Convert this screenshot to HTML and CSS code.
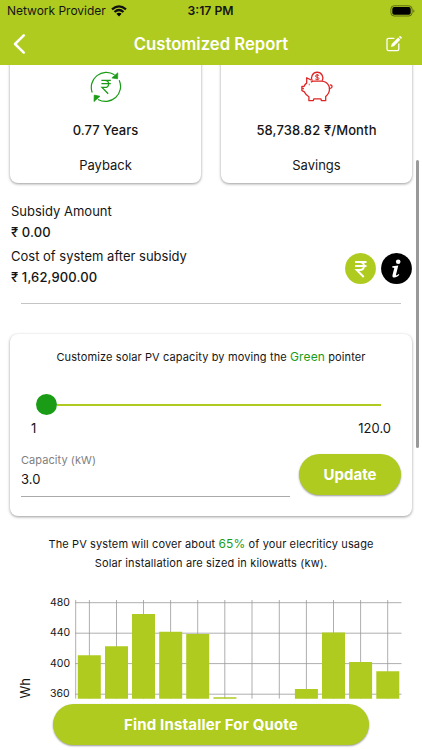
FILE: index.html
```html
<!DOCTYPE html>
<html lang="en">
<head>
<meta charset="utf-8">
<title>Customized Report</title>
<link rel="stylesheet" href="styles.css">
</head>
<body>
<header class="header">
  <div class="status">
    <div class="network"><span class="provider">Network Provider</span>
      <svg width="16" height="12" viewBox="0 0 16 12"><path d="M1 4.4Q8-1.8 15 4.4M3.5 7Q8 3 12.5 7" fill="none" stroke="#111" stroke-width="2.2"/><path d="M5.4 8.8Q8 6.6 10.6 8.8L8 11.4Z"/></svg>
    </div>
    <span class="clock">3:17 PM</span>
    <svg class="battery" width="26" height="12" viewBox="0 0 26 12"><rect x=".9" y=".8" width="21.2" height="10.2" rx="3.2" fill="none" stroke="#5c6c10" stroke-width="1"/><rect x="2.3" y="2.1" width="18.4" height="7.6" rx="1.8"/><path d="M23.4 4.2Q25.6 6 23.4 7.8Z" fill="#5c6c10"/></svg>
  </div>
  <nav class="nav">
    <svg class="back" width="14" height="22" viewBox="0 0 14 22"><path d="M11.8 2.3 3 11l8.8 8.6" fill="none" stroke="#fff" stroke-width="2.5" stroke-linecap="round" stroke-linejoin="round"/></svg>
    <h1 class="title">Customized Report</h1>
    <svg class="edit" width="18" height="18" viewBox="0 0 18 18"><path d="M9.4 3.4H3.6Q2 3.4 2 5v9Q2 15.7 3.6 15.7h8.6Q13.8 15.7 13.8 14V8.4" fill="none" stroke="#fff" stroke-width="1.3"/><path d="m6 11.9.7-2.8 6.5-6.5 2.1 2.1-6.5 6.5ZM13.9 1.9l.7-.7q.5-.4 1 0l1.1 1.1q.4.5 0 1l-.7.7Z" fill="#fff"/></svg>
  </nav>
</header>
<main class="content">
  <section class="stats">
    <article class="card stat">
      <svg class="stat-icon" width="32" height="32" viewBox="0 0 32 32" fill="none" stroke="#1a9c16" stroke-width="1.2"><path d="M2.2 21.5A15 15 0 0 1 24.5 3.8M29.2 9.2A15 15 0 0 1 8 28.4"/><path d="m27.8 1.8-.2 6-5.7-.9ZM4 30.6l.2-6.5 5.8 1.2Z" fill="#1a9c16" stroke-width=".7"/><path d="M11.4 9.4h9.4M11.4 12.7h9.4M11.5 9.4h3.2c5.2 0 5.2 7 0 7H12l6.2 6.3" stroke-width="1.3"/></svg>
      <strong class="value years">0.77 Years</strong><span class="label payback">Payback</span>
    </article>
    <article class="card stat">
      <svg class="stat-icon" width="32" height="32" viewBox="0 0 32 32" fill="none" stroke="#df2424" stroke-width="1.3" stroke-linejoin="round"><path d="M10 9 5.7 6.7v5.4Q3.8 13.4 3 15.4H.9v4.2l2.2 1q1.4 3.2 4.8 5.1v4h4.3l.7-1.9h6.9l.7 1.9h4.2v-4.2c5-4.3 5-10.6.4-14-1.4-1-2.6-1.4-4.4-1.4h-7.9Q11.1 10.1 10 11.2"/><path d="M11.2 9.7a5.7 5.7 0 1 1 10 0M27.9 17.2c4 1 3.9-3.8 1.2-3.1M1.2 17.5h1.7M7.8 13.5h.8"/><path d="M18.1 4.7c-.9-1.2-3.8-1-3.6.5.3 1.6 3.6.8 3.5 2.5-.1 1.3-2.8 1.3-3.7.2M16.2 3v6" stroke-width="1"/></svg>
      <strong class="value savings-value">58,738.82 ₹/Month</strong><span class="label savings">Savings</span>
    </article>
  </section>
  <section class="costs">
    <div class="cost-list">
      <div class="cost"><span class="subsidy">Subsidy Amount</span><b>₹ 0.00</b></div>
      <div class="cost"><span class="system">Cost of system after subsidy</span><b class="total">₹ 1,62,900.00</b></div>
    </div>
    <div class="actions">
      <svg width="31" height="31" viewBox="0 0 31 31"><circle cx="15.5" cy="15.5" r="15.4" fill="#b0cb1f"/><path d="M10 9h11.5M10 13h11.5M10.5 9h4.2c5.7 0 5.7 8 0 8h-3l7 7" fill="none" stroke="#fff" stroke-width="1.9"/></svg>
      <svg width="31" height="31" viewBox="0 0 31 31"><circle cx="15.5" cy="15.5" r="15.4"/><circle cx="17.2" cy="8.7" r="2.3" fill="#fff"/><path d="m11.3 13.3 6-.7-2.3 9.2c-.2 1 .5 1.1 2.5-.7l.8.7c-2.6 3.2-7.7 4-6.8.2l1.8-7.1-2.1-.4Z" fill="#fff"/></svg>
    </div>
  </section>
  <hr class="divider">
  <section class="card customize">
    <p class="hint">Customize solar PV capacity by moving the <span class="green">Green</span> pointer</p>
    <div class="slider"><span class="thumb"></span><span class="track"></span></div>
    <div class="range"><span>1</span><span>120.0</span></div>
    <div class="form">
      <div class="field"><span class="field-label">Capacity (kW)</span><span class="field-value">3.0</span></div>
      <button class="button update">Update</button>
    </div>
  </section>
  <div class="summary"><p class="cover">The PV system will cover about <span class="green">65%</span> of your elecriticy usage</p><p class="sizes">Solar installation are sized in kilowatts (kw).</p></div>
  <section class="chart">
    <span class="unit">Wh</span>
    <div class="ticks"><span>480</span><span>440</span><span>400</span><span>360</span></div>
    <svg class="plot" width="327" height="100" viewBox="75 599 327 100">
      <path d="M75 602.7H401.5M75 633.2H401.5M75 663.6H401.5M75 694.2H401.5M75.7 600v98.6M89.4 600v98.6M116.5 600v98.6M143.5 600v98.6M170.6 600v98.6M197.7 600v98.6M224.8 600v98.6M252 600v98.6M279.3 600v98.6M306.4 600v98.6M333.5 600v98.6M360.6 600v98.6M387.7 600v98.6" fill="none" stroke="#999" stroke-width=".8"/>
      <path d="M77.8 655.3h23v43.4h-23ZM105 646.2h23v52.5h-23ZM132 614.1h23v84.6h-23ZM159.2 631.8h23v66.9h-23ZM186.2 634h23v64.7h-23ZM213.4 697.2h23v1.5h-23ZM294.9 689h23v9.7h-23ZM322 632.4h23v66.3h-23ZM349.1 662.1h23v36.6h-23ZM376.3 671.3h23v27.4h-23Z" fill="#b0cb1f"/>
    </svg>
  </section>
  <button class="button quote">Find Installer For Quote</button>
</main>
<div class="scrollbar"></div>
</body>
</html>
```
FILE: styles.css
```css
* { box-sizing: border-box; }
body { margin: 0; width: 422px; height: 750px; overflow: hidden; background: #fff; color: #151515; font-family: Inter, "Noto Sans", sans-serif; font-size: 13px; line-height: 20px; }
svg { display: block; flex: none; }
p, h1 { margin: 0; }
span, b, strong, p, h1, button { white-space: nowrap; }
.header { position: relative; z-index: 2; height: 65px; background: #b0cb1f; }
.status { height: 22px; display: grid; grid-template-columns: 1fr auto 1fr; align-items: center; padding: 0 6px 0 7px; }
.network { display: flex; align-items: center; gap: 5px; }
.provider { font-size: 12px; letter-spacing: -.02px; }
.clock { font-weight: 600; font-size: 12.2px; letter-spacing: 0; transform: translateX(-1px); }
.battery { justify-self: end; }
.nav { height: 43px; display: grid; grid-template-columns: 1fr auto 1fr; align-items: center; padding: 0 19px 0 12px; }
.title { color: #fff; font-size: 16.7px; font-weight: 600; transform: translateX(3.5px); }
.edit { justify-self: end; }
.content { height: 685px; }
.card { background: #fff; border-radius: 8px; box-shadow: 0 1px 3px rgba(0,0,0,.4); }
.stats { display: flex; gap: 20px; padding: 0 10px; margin-top: -15px; }
.stat { width: 191px; height: 133px; padding-top: 21px; display: flex; flex-direction: column; align-items: center; }
.value { margin-top: 17px; font-weight: 500; }
.savings-value { letter-spacing: .13px; }
.label { margin-top: 15px; }
.costs { display: flex; justify-content: space-between; padding: 18px 10px 0 11px; height: 120px; }
.cost { display: flex; flex-direction: column; height: 45px; line-height: 21px; }
.cost b { font-weight: 500; letter-spacing: .12px; }
.actions { display: flex; gap: 5px; margin-top: 52px; }
.divider { width: 380px; height: 1px; margin: 0 auto; border: 0; background: #c4c4c4; }
.customize { width: 402px; height: 182px; margin: 30px auto 0; padding: 13px 11px 0; }
.hint { text-align: center; font-size: 11px; letter-spacing: .12px; height: 20px; }
.green { color: #1a9c16; font-size: 12px; }
.slider { display: flex; align-items: center; height: 21px; margin: 27px 20px 0 15px; }
.thumb { width: 21px; height: 21px; border-radius: 50%; background: #1a9c16; }
.track { flex: 1; height: 2px; background: #b0cb1f; }
.range { display: flex; justify-content: space-between; margin: 3px 10px 0; }
.form { display: flex; justify-content: space-between; margin-top: 15px; }
.field { width: 269px; height: 44px; border-bottom: 1px solid #aaa; display: flex; flex-direction: column; }
.field-label { color: #808080; font-size: 11px; letter-spacing: .06px; line-height: 14px; }
.field-value { line-height: 24px; }
.button { display: block; border: 0; border-radius: 21px; background: #b0cb1f; color: #fff; font: 700 15px/20px Inter, sans-serif; box-shadow: 0 1px 2px rgba(0,0,0,.4); padding: 0; }
.update { width: 102px; height: 41px; margin-top: 1px; }
.summary { text-align: center; font-size: 11px; letter-spacing: .12px; line-height: 19px; height: 57px; padding-top: 18px; }
.sizes { letter-spacing: .14px; }
.chart { display: grid; grid-template-columns: 49px 26px 327px; height: 100px; margin-top: 26px; }
.unit { writing-mode: vertical-rl; transform: rotate(180deg); justify-self: center; align-self: end; margin-bottom: 6px; }
.ticks { display: flex; flex-direction: column; gap: 10.4px; font-size: 10.5px; margin: -6px 0 0 1px; }
.quote { width: 316px; height: 41px; margin: 5px 0 0 53px; letter-spacing: .17px; }
.scrollbar { position: absolute; z-index: 1; right: 3px; top: 160px; width: 3px; height: 288px; border-radius: 2px; background: #999; }
```
